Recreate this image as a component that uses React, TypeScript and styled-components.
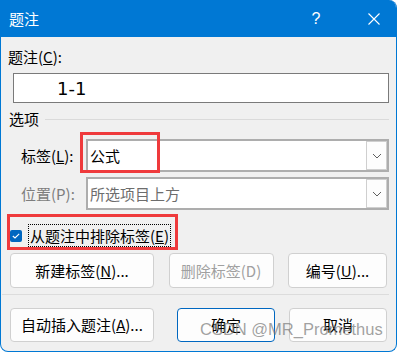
import styled, { createGlobalStyle } from "styled-components";

const GlobalStyle = createGlobalStyle`
  body {
    margin: 0;
    background: #ffffff;
    font-family: "Noto Sans CJK SC", "Noto Sans", sans-serif;
  }
`;

const Window = styled.div`
  position: relative;
  box-sizing: border-box;
  width: 397px;
  height: 352px;
  display: flex;
  flex-direction: column;
  background: #f0f0f0;
  border: 1px solid #0078d4;
  border-top: none;
  border-radius: 0 8px 8px 8px;
  overflow: hidden;
  font-size: 15px;
  color: #000;
`;

const TitleBar = styled.div`
  height: 37px;
  display: flex;
  align-items: center;
  background: #0078d4;
  color: #fff;
  padding-left: 9px;
  margin: 0 -1px;
`;

const Title = styled.span`
  flex: 1;
  line-height: 20px;
`;

const TitleButton = styled.div`
  width: 46px;
  height: 37px;
  display: flex;
  align-items: center;
  justify-content: center;
  font-family: "Liberation Sans", sans-serif;
  font-size: 16px;
`;

const Body = styled.div`
  flex: 1;
  display: flex;
  flex-direction: column;
  padding: 10px 7px 0 7px;
`;

const Label = styled.div`
  line-height: 20px;
`;

const CaptionInput = styled.div`
  box-sizing: border-box;
  height: 30px;
  margin: 6px 0 0 5px;
  border: 1px solid #7a7a7a;
  background: #fff;
  padding-left: 43px;
  display: flex;
  align-items: center;
  font-family: "DejaVu Sans", sans-serif;
  font-size: 18px;
`;

const Section = styled.div`
  display: flex;
  align-items: center;
  margin-top: 6px;
  line-height: 20px;
  padding-left: 1px;
`;

const SectionLine = styled.div`
  flex: 1;
  height: 1px;
  background: #dadada;
  margin-left: 6px;
`;

const FieldRow = styled.div<{ $top: number }>`
  display: flex;
  align-items: center;
  margin-top: ${(p) => p.$top}px;
  padding-left: 13px;
`;

const FieldLabel = styled.div<{ $disabled?: boolean }>`
  width: 65px;
  line-height: 20px;
  color: ${(p) => (p.$disabled ? "#7d7d7d" : "#000")};
`;

const Combo = styled.div<{ $disabled?: boolean }>`
  position: relative;
  flex: 1;
  box-sizing: border-box;
  height: 33px;
  display: flex;
  align-items: center;
  border: 2px solid #adadad;
  background: #fff;
  padding-left: 2px;
  color: ${(p) => (p.$disabled ? "#6d6d6d" : "#000")};
`;

const ComboText = styled.span`
  flex: 1;
  line-height: 20px;
`;

const DropButton = styled.div`
  box-sizing: border-box;
  width: 21px;
  height: 29px;
  display: flex;
  align-items: center;
  justify-content: center;
  border: 1px solid #cfcfcf;
  background: #fdfdfd;
`;

const Highlight = styled.div`
  position: absolute;
  left: -8px;
  top: -9px;
  width: 80px;
  height: 41px;
  box-sizing: border-box;
  border: 3px solid #ef3a3c;
  pointer-events: none;
`;

const CheckRow = styled.div`
  align-self: flex-start;
  display: inline-flex;
  align-items: center;
  box-sizing: border-box;
  height: 36px;
  margin: 4px 0 0 -1px;
  padding: 7px 4px 0 0;
  border: 3px solid #ef3a3c;
`;

const CheckBox = styled.div`
  width: 12px;
  height: 12px;
  border-radius: 2px;
  background: #0067c0;
  display: flex;
  align-items: center;
  justify-content: center;
`;

const FocusText = styled.span`
  box-sizing: border-box;
  height: 23px;
  display: flex;
  align-items: center;
  margin-left: 6px;
  padding: 0 1px;
  border: 1px dotted #000;
`;

const ButtonRow = styled.div<{ $top: number; $height: number }>`
  display: flex;
  justify-content: space-between;
  margin: ${(p) => p.$top}px 2px 0 2px;
  height: ${(p) => p.$height}px;
`;

const ButtonGroup = styled.div`
  display: flex;
  gap: 14px;
`;

const Button = styled.div<{ $w: number; $disabled?: boolean; $default?: boolean }>`
  box-sizing: border-box;
  width: ${(p) => p.$w}px;
  height: 100%;
  display: flex;
  align-items: center;
  justify-content: center;
  background: #fdfdfd;
  border: 1px solid ${(p) => (p.$default ? "#0067c0" : "#d0d0d0")};
  border-radius: 4px;
  color: ${(p) => (p.$disabled ? "#a0a0a0" : "#000")};
  line-height: 20px;
`;

const Divider = styled.div`
  height: 1px;
  background: #dcdcdc;
  margin: 6px 0 0 -6px;
`;

const Watermark = styled.div`
  position: absolute;
  left: 199px;
  top: 319px;
  font-family: "Liberation Sans", sans-serif;
  font-size: 16.5px;
  line-height: 20px;
  color: rgba(120, 120, 120, 0.7);
  white-space: nowrap;
  pointer-events: none;
`;

function Chevron() {
  return (
    <svg width="10" height="6" viewBox="0 0 10 6">
      <path d="M1 1 L5 5 L9 1" fill="none" stroke="#5f5f5f" strokeWidth="1" />
    </svg>
  );
}

export default function App() {
  return (
    <>
      <GlobalStyle />
      <Window>
        <TitleBar>
          <Title>题注</Title>
          <TitleButton>?</TitleButton>
          <TitleButton style={{ marginLeft: 12 }}>
            <svg width="12" height="12" viewBox="0 0 12 12">
              <path d="M0.5 0.5 L11.5 11.5 M11.5 0.5 L0.5 11.5" stroke="#fff" strokeWidth="1.1" />
            </svg>
          </TitleButton>
        </TitleBar>
        <Body>
          <Label>
            题注(<u>C</u>):
          </Label>
          <CaptionInput>1-1</CaptionInput>
          <Section>
            选项
            <SectionLine />
          </Section>
          <FieldRow $top={10}>
            <FieldLabel>
              标签(<u>L</u>):
            </FieldLabel>
            <Combo>
              <ComboText>公式</ComboText>
              <DropButton>
                <Chevron />
              </DropButton>
              <Highlight />
            </Combo>
          </FieldRow>
          <FieldRow $top={5}>
            <FieldLabel $disabled>位置(P):</FieldLabel>
            <Combo $disabled>
              <ComboText>所选项目上方</ComboText>
              <DropButton>
                <Chevron />
              </DropButton>
            </Combo>
          </FieldRow>
          <CheckRow>
            <CheckBox>
              <svg width="8" height="6" viewBox="0 0 8 6">
                <path d="M0.8 3 L3 5 L7.2 0.8" fill="none" stroke="#fff" strokeWidth="1.1" />
              </svg>
            </CheckBox>
            <FocusText>
              从题注中排除标签(<u>E</u>)
            </FocusText>
          </CheckRow>
          <ButtonRow $top={3} $height={35}>
            <Button $w={144}>
              新建标签(<u>N</u>)...
            </Button>
            <Button $w={105} $disabled>
              删除标签(D)
            </Button>
            <Button $w={99}>
              编号(<u>U</u>)...
            </Button>
          </ButtonRow>
          <Divider />
          <ButtonRow $top={13} $height={34}>
            <Button $w={144}>
              自动插入题注(<u>A</u>)...
            </Button>
            <ButtonGroup>
              <Button $w={98} $default>
                确定
              </Button>
              <Button $w={98}>取消</Button>
            </ButtonGroup>
          </ButtonRow>
        </Body>
        <Watermark>CSDN @MR_Promethus</Watermark>
      </Window>
    </>
  );
}
